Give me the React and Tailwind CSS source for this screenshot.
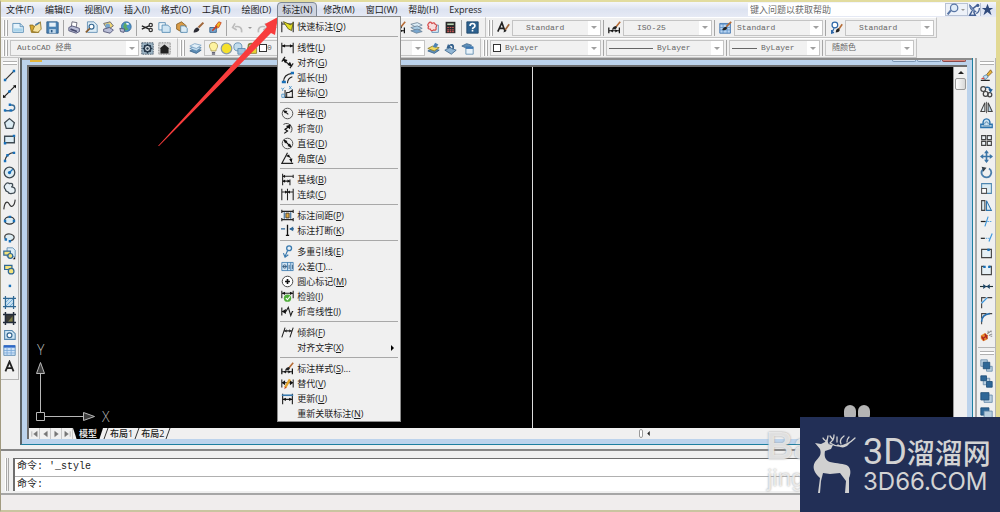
import React, { useState } from "react";

// 16x16 drawings used by the toolbars and the menu
const icons = {
  newFile: (
    <>
      <path d="M1 3h9l4 4v7H1z" fill="#e6f3fb" stroke="#4d86b0" />
      <path d="M2 9h11v4H2z" fill="#a9d3ea" />
      <path d="M10 3v4h4" fill="none" stroke="#4d86b0" />
    </>
  ),
  open: (
    <>
      <path d="M1 5h4l1 2h6v7H3z" fill="#d9a92c" stroke="#8a6d1d" />
      <path d="M4 13l3-7 7-5 1 9-4 4z" fill="#f7e3a1" stroke="#8a6d1d" />
      <path d="M8 5l5-3" stroke="#4d7ca8" strokeWidth="2" />
    </>
  ),
  save: (
    <>
      <path d="M1 1h13l1 1v13H1z" fill="#4a82b4" stroke="#2c5a86" />
      <path d="M4 2h8v5H4z" fill="#e7f0f8" />
      <path d="M4 10h8v5H4z" fill="#bcd4e8" />
      <path d="M6 11h2v3H6z" fill="#2c5a86" />
    </>
  ),
  print: (
    <>
      <path d="M5 1l6 1-1 6-6-1z" fill="#fff" stroke="#556" />
      <path d="M1 8l4-2 9 3v4l-4 2-9-3z" fill="#b9bdd6" stroke="#474a6e" />
      <path d="M3 10l8 3" stroke="#474a6e" strokeWidth="2" />
    </>
  ),
  preview: (
    <>
      <path d="M3 1h8l4 4v9H3z" fill="#dcecf6" stroke="#5686ad" />
      <circle cx="8" cy="7" r="3" fill="#fff" stroke="#376892" strokeWidth="1.5" />
      <path d="M6 9l-5 5" stroke="#8a5b2b" strokeWidth="2" />
    </>
  ),
  publish: (
    <>
      <path d="M2 3l8-2 4 5-7 5z" fill="#f0d774" stroke="#5a5a6c" />
      <circle cx="7" cy="6" r="3" fill="#79a6cd" />
      <path d="M2 10l7-2 5 3-4 4-8-2z" fill="#b9bdd6" stroke="#474a6e" />
    </>
  ),
  globe: (
    <>
      <circle cx="9" cy="7" r="6" fill="#4b95cf" stroke="#376892" />
      <path d="M7 2l4 2-2 3 3 3-4 2-3-5z" fill="#5aa866" />
      <path d="M1 9l6 1-1 4-4-1z" fill="#b9bdd6" stroke="#474a6e" />
      <path d="M9 3l3 1" stroke="#fff" strokeWidth="2" />
    </>
  ),
  cut: (
    <>
      <path d="M1 6l9 4M1 10l9-4" stroke="#222" strokeWidth="1.5" />
      <circle cx="12" cy="5" r="2" fill="none" stroke="#333" strokeWidth="1.5" />
      <circle cx="12" cy="11" r="2" fill="none" stroke="#333" strokeWidth="1.5" />
    </>
  ),
  copyClip: (
    <>
      <path d="M1 2h8v9H1z" fill="#eef6fb" stroke="#4d86b0" />
      <path d="M5 5h7l3 3v6H5z" fill="#cfe5f3" stroke="#4d86b0" />
    </>
  ),
  paste: (
    <>
      <path d="M2 4l6-3 6 5-5 8-7-4z" fill="#d99b45" stroke="#815a22" />
      <path d="M7 6h5l3 3v5H7z" fill="#dcecf6" stroke="#4d86b0" />
    </>
  ),
  brush: (
    <>
      <path d="M8 8l6-6" stroke="#a0673b" strokeWidth="2.5" />
      <path d="M2 14c0-4 3-6 5-6l2 2c0 2-3 4-7 4z" fill="#2b2b33" />
    </>
  ),
  blockEdit: (
    <>
      <path d="M8 6l4-5 3 1-3 6-3 1z" fill="#f3b91d" stroke="#c73e23" />
      <path d="M1 8h8v6H1z" fill="#78a6cf" stroke="#2c5a86" />
      <path d="M4 12l6-6" stroke="#c73e23" strokeWidth="2" />
    </>
  ),
  undo: <path d="M13 14c1-6-3-8-8-7m0-4L2 8l5 3" fill="none" stroke="#bcbcbc" strokeWidth="2" />,
  redo: <path d="M3 14C2 8 6 6 11 7m0-4l3 5-5 3" fill="none" stroke="#bcbcbc" strokeWidth="2" />,
  pan: <path d="M8 1v14M1 8h14M5 4l3-3 3 3M5 12l3 3 3-3" fill="none" stroke="#376892" />,
  zoom: (
    <>
      <circle cx="7" cy="6" r="4" fill="#dcecf6" stroke="#376892" strokeWidth="1.5" />
      <path d="M10 9l5 6" stroke="#223" strokeWidth="2" />
    </>
  ),
  sheets: (
    <>
      <path d="M1 4l8-2 6 3-7 3z" fill="#dcecf6" stroke="#6b8396" />
      <path d="M1 8l8-2 6 3-7 3z" fill="#a9cbe4" stroke="#6b8396" />
      <path d="M1 12l8-2 6 3-7 2z" fill="#78a6cf" stroke="#6b8396" />
    </>
  ),
  markup: (
    <>
      <path d="M6 5h8v9H6z" fill="#dcecf6" stroke="#5686ad" />
      <path
        d="M2 3q2-3 4 0q3-2 4 1q3 1 1 4q1 4-3 3q-3 2-4-1q-4 0-2-3q-2-2 0-4z"
        fill="#f7dede"
        stroke="#d64a4a"
        strokeWidth="1.5"
      />
    </>
  ),
  calc: (
    <>
      <path d="M2 1h12v14H2z" fill="#2a2a2a" />
      <path d="M4 3h8v2H4z" fill="#b8d3b0" />
      <path d="M4 8h8M4 11h8M4 13h8" stroke="#c55" strokeDasharray="2 1" strokeWidth="1.5" />
    </>
  ),
  help: (
    <>
      <path d="M1 1h14v14H1z" fill="#2d618f" stroke="#1c4468" />
      <path d="M5 6c0-4 6-4 6 0 0 2-3 2-3 4M8 11v2" fill="none" stroke="#fff" strokeWidth="2" />
    </>
  ),
  textStyle: (
    <>
      <path d="M1 13L6 2l4 11M3 9h6" fill="none" stroke="#222" strokeWidth="2" />
      <path d="M10 11l5-7" stroke="#a0673b" strokeWidth="2" />
      <path d="M8 14l1-4 3 2z" fill="#222" />
    </>
  ),
  dimStyle: (
    <>
      <path d="M1 8v7M14 8v7M1 12h13" stroke="#111" strokeWidth="1.5" />
      <path d="M3 12l3-2v4zM12 12l-3-2v4z" fill="#111" />
      <path d="M10 7l5-6" stroke="#b56b35" strokeWidth="2" />
      <path d="M5 10c1-3 3-4 5-4l1 2c-1 2-3 3-6 2z" fill="#222" />
    </>
  ),
  tableStyle: (
    <>
      <path d="M1 3h13v12H1z" fill="#b9d5f2" stroke="#2f68a8" />
      <path d="M1 4h13M1 8h13M1 11h13M5 3v12M10 3v12" stroke="#5f92ca" />
      <path d="M9 7l6-6" stroke="#b56b35" strokeWidth="2" />
      <path d="M4 11c1-3 3-4 5-4l1 2c-1 2-3 3-6 2z" fill="#222" />
    </>
  ),
  leaderStyle: (
    <>
      <circle cx="6" cy="5" r="3.5" fill="#fff" stroke="#2f68a8" strokeWidth="1.5" />
      <path d="M5 9l-3 6m0-4v4l3-1" fill="none" stroke="#2f68a8" strokeWidth="1.5" />
      <path d="M11 10l4-6" stroke="#b56b35" strokeWidth="2" />
      <path d="M7 14c0-3 2-5 4-5l1 2c0 2-2 3-5 3z" fill="#222" />
    </>
  ),
  gear: (
    <>
      <path d="M1 1h14v14H1z" fill="#9db4c4" stroke="#33475a" strokeDasharray="2 1" />
      <circle cx="8" cy="8" r="4" fill="#dfe8ee" stroke="#26384a" strokeWidth="2" />
      <circle cx="8" cy="8" r="1.5" fill="#26384a" />
      <path d="M8 2v2M8 12v2M2 8h2M12 8h2M4 4l1 1M11 11l1 1M12 4l-1 1M4 12l1-1" stroke="#26384a" strokeWidth="1.5" />
    </>
  ),
  home: (
    <>
      <path d="M1 1h14v14H1z" fill="#d8d8d8" stroke="#555" strokeDasharray="1 1" />
      <path d="M2 8l6-5 6 5h-1v6H3V8z" fill="#222" />
    </>
  ),
  layers: (
    <>
      <path d="M1 11l6-3 8 2-6 4z" fill="#5f8fb8" stroke="#3c668c" />
      <path d="M1 8l6-3 8 2-6 4z" fill="#c4dcee" stroke="#5686ad" />
      <path d="M1 5l6-3 8 2-6 4z" fill="#e2eff8" stroke="#7aa3c4" />
    </>
  ),
  bulb: (
    <>
      <path d="M5 11c0-3-2-3-2-6 0-6 10-6 10 0 0 3-2 3-2 6z" fill="#fdf3a0" stroke="#a8964a" />
      <path d="M6 13h4M6 15h4" stroke="#667" strokeWidth="1.5" />
    </>
  ),
  sun: <circle cx="8" cy="8" r="6.5" fill="#f5e12c" stroke="#8b9aa5" strokeWidth="1.5" />,
  viewport: (
    <>
      <circle cx="6" cy="6" r="5" fill="#c2dcec" stroke="#5686ad" />
      <path d="M6 8h9v7H6z" fill="#9fc0da" stroke="#5686ad" />
    </>
  ),
  lock: (
    <>
      <path d="M3 8V5c0-4 7-4 7 0v3" fill="none" stroke="#887f3a" strokeWidth="2" />
      <path d="M2 7h11v7H2z" fill="#e9d431" stroke="#887f3a" />
    </>
  ),
  layerCurrent: (
    <>
      <path d="M1 11l6-3 8 2-6 4z" fill="#5f8fb8" stroke="#3c668c" />
      <path d="M1 8l6-3 8 2-6 4z" fill="#f0d95c" stroke="#8a7a29" />
      <path d="M7 6l3-5 4 2-3 4z" fill="#4c82b4" />
    </>
  ),
  layerPrev: (
    <>
      <path d="M1 10l6-3 8 3-6 5z" fill="#90b5d4" stroke="#3c668c" />
      <path d="M12 9c2-7-3-8-6-5l-1-2-2 6 6-1-2-2c3-1 4 1 3 4z" fill="#33608c" />
    </>
  ),
  layerStates: (
    <>
      <path d="M1 5l6-3 6 2-5 4z" fill="#5f8fb8" stroke="#3c668c" />
      <path d="M6 6h9v9H6z" fill="#e8f2fa" stroke="#5686ad" />
      <path d="M6 7h9" stroke="#3c78b4" strokeWidth="3" />
    </>
  ),
  search: (
    <>
      <circle cx="10" cy="6" r="4.5" fill="#e1edf9" stroke="#5976a5" strokeWidth="1.5" />
      <path d="M6 9l-4 5" stroke="#5976a5" strokeWidth="2.5" />
    </>
  ),
  comm: (
    <>
      <path d="M2 2q0 8 8 9z" fill="#7d95bf" stroke="#425f93" />
      <path d="M6 7l5-4M5 10l-3 5h7l-2-4" fill="none" stroke="#425f93" strokeWidth="1.8" />
      <circle cx="12" cy="3" r="2" fill="#425f93" />
      <path d="M14 6q0 5-4 7" fill="none" stroke="#425f93" strokeWidth="1.5" />
    </>
  ),
  star: <path d="M8 1l2 5h5l-4 3 2 6-5-4-5 4 2-6-4-3h5z" fill="#2f4a7c" />,

  // draw toolbar
  line: (
    <>
      <path d="M3 13L13 3" stroke="#333" strokeWidth="1.5" />
      <path d="M1 12h3v3H1zM12 1h3v3h-3z" fill="#176fb8" />
    </>
  ),
  xline: (
    <>
      <path d="M1 15L15 1" stroke="#222" strokeWidth="1.5" />
      <path d="M0 12l4 3-4 1zM12 1l4 3V0z" fill="#111" />
      <circle cx="8" cy="8" r="1.8" fill="#176fb8" />
    </>
  ),
  pline: (
    <>
      <path d="M2 12h9c5-1 4-7 0-7H9" fill="none" stroke="#376892" strokeWidth="1.7" />
      <path d="M1 10h3v3H1zM8 10h3v3H8zM7 3h3v3H7z" fill="#176fb8" />
    </>
  ),
  polygon: <path d="M8 2l6 5-2 7H4L2 7z" fill="#dcecf3" stroke="#3e4a52" strokeWidth="1.6" />,
  rect: (
    <>
      <path d="M2 4h12v8H2z" fill="#dcecf3" stroke="#3e4a52" strokeWidth="1.6" />
      <path d="M1 11h3v3H1zM12 2h3v3h-3z" fill="#176fb8" />
    </>
  ),
  arc: (
    <>
      <path d="M2 14Q4 4 14 3" fill="none" stroke="#333" strokeWidth="1.5" />
      <path d="M1 12h3v3H1zM4 5h3v3H4zM12 2h3v3h-3z" fill="#176fb8" />
    </>
  ),
  circle: (
    <>
      <circle cx="8" cy="8" r="6.5" fill="#dcecf3" stroke="#3e4a52" strokeWidth="1.6" />
      <path d="M8 8l4-4" stroke="#176fb8" strokeWidth="1.5" />
      <circle cx="8" cy="8" r="2" fill="#176fb8" />
    </>
  ),
  cloud: (
    <path
      d="M3 3q2-3 5-1q4-1 4 2q-1 2-2 2q5 0 5 4q0 4-4 4q-4 1-5-2q-3 0-3-3q-3-3 0-6z"
      fill="#e6eff4"
      stroke="#3e4a52"
      strokeWidth="1.5"
    />
  ),
  spline: <path d="M1 14C2 3 6 4 8 8s6 3 7-6" fill="none" stroke="#333" strokeWidth="1.4" />,
  ellipse: (
    <>
      <ellipse cx="8" cy="8" rx="6" ry="4.5" fill="#dcecf3" stroke="#333" strokeWidth="1.6" />
      <path d="M1 7h3v3H1zM12 7h3v3h-3zM7 2h3v3H7z" fill="#176fb8" />
    </>
  ),
  ellipseArc: (
    <>
      <path d="M3 10C0 4 6 3 10 4c6 2 4 7-1 8" fill="#dcecf3" stroke="#444" strokeWidth="1.5" />
      <path d="M2 9h3v3H2zM7 11h3v3H7z" fill="#176fb8" />
    </>
  ),
  insertBlock: (
    <>
      <path d="M5 1h7l3 3v8H5z" fill="#dcecf6" stroke="#5686ad" />
      <path d="M1 5h8v5H1z" fill="#f3e27b" stroke="#2f6793" strokeWidth="1.5" />
      <circle cx="9" cy="11" r="3" fill="#f3e27b" stroke="#2f6793" strokeWidth="1.5" />
      <path d="M12 15h3v-3z" fill="#111" />
    </>
  ),
  makeBlock: (
    <>
      <path d="M2 3h9v5H2z" fill="#f3e27b" stroke="#2f6793" strokeWidth="1.5" />
      <circle cx="10" cy="10" r="3.5" fill="#f3e27b" stroke="#2f6793" strokeWidth="1.5" />
    </>
  ),
  point: <path d="M7 7h3v3H7z" fill="#176fb8" />,
  hatch: (
    <>
      <path d="M3 3h10v10H3z" fill="#c7dff0" />
      <path d="M3 8l5-5M3 13L13 3M8 13l5-5" stroke="#5da0d0" />
      <path d="M3 0v16M13 0v16M0 3h16M0 13h16" stroke="#2f6793" strokeWidth="1.5" />
    </>
  ),
  gradient: (
    <>
      <path d="M3 3h10v10H3z" fill="#3a3a38" />
      <path d="M6 12l6-7v7z" fill="#7d7c45" />
      <path d="M3 0v16M13 0v16M0 3h16M0 13h16" stroke="#222b3a" strokeWidth="1.8" />
    </>
  ),
  region: (
    <>
      <path d="M2 3h9l4 4v7H2z" fill="#cfe5f3" stroke="#5686ad" strokeWidth="1.3" />
      <circle cx="8" cy="9" r="3" fill="#fff" stroke="#376892" strokeWidth="1.5" />
    </>
  ),
  table: (
    <>
      <path d="M1 2h14v12H1z" fill="#cfe3f7" stroke="#5686ad" />
      <path d="M1 3h14" stroke="#2f68c8" strokeWidth="3" />
      <path d="M1 8h14M1 11h14M5 4v10M10 4v10" stroke="#7aa8d8" />
    </>
  ),
  mtext: <path d="M3 14L8 2l5 12M5 10h6" fill="none" stroke="#222" strokeWidth="2.2" />,

  // modify toolbar
  erase: (
    <>
      <path d="M8 7l5-6 2 3-5 5z" fill="#e8b23a" stroke="#7b5b23" />
      <path d="M4 9l4-2 2 3-4 3z" fill="#c9dff1" stroke="#4d86b0" />
      <path d="M1 12l3-2 2 3z" fill="#d5483f" />
      <path d="M1 14h11" stroke="#222" strokeWidth="1.5" />
    </>
  ),
  copy: (
    <>
      <circle cx="4" cy="5" r="3" fill="none" stroke="#444" strokeWidth="1.5" />
      <circle cx="7" cy="11" r="3" fill="none" stroke="#444" strokeWidth="1.5" />
      <circle cx="12" cy="12" r="2.5" fill="none" stroke="#444" strokeWidth="1.5" />
      <path d="M7 3c4-1 6 1 6 4m-2-2l2 3 2-3" fill="none" stroke="#245f95" strokeWidth="1.7" />
    </>
  ),
  mirror: (
    <>
      <path d="M6 2v11H1z" fill="#e6eff4" stroke="#444" strokeWidth="1.3" />
      <path d="M10 2v11h5z" fill="#b8d4e8" stroke="#444" strokeWidth="1.3" />
      <path d="M8 1v14" stroke="#444" strokeWidth="1" />
    </>
  ),
  offset: (
    <>
      <path d="M1 13h14v-4h-3c2-9-10-9-8 0H1z" fill="#cfe5f3" stroke="#2d74ad" strokeWidth="1.7" />
      <path d="M3 11h10M6 9c-1-4 5-4 4 0" fill="none" stroke="#3a6e98" />
    </>
  ),
  array: (
    <path d="M2 2h5v5H2zM9 2h5v5H9zM2 9h5v5H2zM9 9h5v5H9z" fill="#eef4f8" stroke="#444" strokeWidth="1.4" />
  ),
  move: (
    <>
      <path d="M8 2v12M2 8h12" stroke="#3b74a6" strokeWidth="2" />
      <path d="M8 0l3 4H5zM8 16l3-4H5zM0 8l4-3v6zM16 8l-4-3v6z" fill="#3b74a6" />
    </>
  ),
  rotate: (
    <>
      <path d="M4 4c-5 5 0 10 4 10 6 0 8-8 3-11" fill="none" stroke="#4a7eab" strokeWidth="2.2" />
      <path d="M2 1l6 1-4 5z" fill="#333f4a" />
    </>
  ),
  scale: (
    <>
      <path d="M2 2h12v12H2z" fill="#dcecf3" stroke="#4d86b0" strokeWidth="1.3" />
      <path d="M2 8h6v6H2z" fill="#fff" stroke="#555" strokeWidth="1.3" />
    </>
  ),
  stretch: (
    <>
      <path d="M2 2h4v12H2z" fill="#dcecf3" stroke="#444" strokeWidth="1.3" />
      <path d="M8 2l6 12H8z" fill="#dcecf3" stroke="#2d74ad" strokeWidth="1.3" />
    </>
  ),
  trim: (
    <>
      <path d="M1 8h6" stroke="#222" strokeWidth="1.5" />
      <path d="M9 8h6" stroke="#3c96dc" strokeDasharray="2 1" />
      <path d="M6 14l4-12" stroke="#3c96dc" strokeWidth="1.4" />
    </>
  ),
  extend: (
    <>
      <path d="M1 9h5" stroke="#222" strokeWidth="1.5" />
      <path d="M7 9h5" stroke="#3c96dc" strokeDasharray="2 1" />
      <path d="M11 13l4-10" stroke="#3c96dc" strokeWidth="1.4" />
    </>
  ),
  breakPoint: (
    <>
      <path d="M2 3h12v10H2z" fill="#e6f0f6" stroke="#444" strokeWidth="1.4" />
      <path d="M9 2h3v3H9z" fill="#176fb8" />
    </>
  ),
  breakLine: (
    <>
      <path d="M5 3H2v10h12V3h-3" fill="#e6f0f6" stroke="#444" strokeWidth="1.4" />
      <path d="M4 2h3v3H4zM10 2h3v3h-3z" fill="#176fb8" />
    </>
  ),
  join: (
    <>
      <path d="M0 8h16" stroke="#233" strokeWidth="1.4" />
      <path d="M4 5l4 3-4 3zM12 5L8 8l4 3z" fill="#1d4668" />
    </>
  ),
  chamfer: (
    <>
      <path d="M2 15V9M9 2h6M2 7V2h5" fill="none" stroke="#444" strokeWidth="1.4" />
      <path d="M2 9l7-7" stroke="#3c96dc" strokeWidth="1.6" />
    </>
  ),
  fillet: (
    <>
      <path d="M2 15V11M11 2h4M2 8V2h6" stroke="#444" fill="none" strokeWidth="1.3" />
      <path d="M2 12Q2 3 12 2" fill="none" stroke="#286fae" strokeWidth="2" />
    </>
  ),
  explode: (
    <>
      <path d="M1 8l5-3 4 3-1 5-5 2-3-3z" fill="#e88a2b" />
      <path d="M2 9l3 5M6 6l3 6M3 12l6-4" stroke="#a22" strokeWidth="1.6" />
      <path d="M9 6l5-4M11 8l4-2M10 2v3M14 3v1M13 9h2" stroke="#8b8b8b" strokeWidth="1.3" />
    </>
  ),
  front: (
    <>
      <path d="M1 1h8v8H1zM8 9h7v6H8z" fill="#b9cfe0" stroke="#6287a8" />
      <path d="M4 4h8v8H4z" fill="#2f6797" stroke="#1f4d77" />
    </>
  ),
  back: (
    <>
      <path d="M4 4h8v8H4z" fill="#b9cfe0" stroke="#6287a8" />
      <path d="M1 1h7v6H1zM8 8h7v7H8z" fill="#2f6797" stroke="#1f4d77" />
    </>
  ),
  above: (
    <>
      <path d="M5 5h10v9H5z" fill="#b9cfe0" stroke="#6287a8" />
      <path d="M1 2h10v9H1z" fill="#2f6797" stroke="#1f4d77" />
    </>
  ),
  under: (
    <>
      <path d="M1 1h10v9H1z" fill="#2f6797" stroke="#1f4d77" />
      <path d="M5 5h10v9H5z" fill="#b9cfe0" stroke="#6287a8" />
    </>
  ),

  // dimension menu
  quick: (
    <>
      <path d="M1 2v13M15 2v13M1 5h14" stroke="#222" strokeWidth="1.3" />
      <path d="M3 2l9 4 3-3-2 10-4-2-5-7z" fill="#e2dd22" stroke="#55520f" />
    </>
  ),
  linear: (
    <>
      <path d="M1 2v13M15 2v13M1 6h14" stroke="#222" strokeWidth="1.3" />
      <path d="M1 6l4-2v4zM15 6l-4-2v4z" fill="#111" />
    </>
  ),
  aligned: (
    <>
      <path d="M3 5l9 7M1 7l4-6M11 15l4-6" stroke="#222" strokeWidth="1.4" />
      <path d="M2 3l6 2-3 4zM14 13l-6-2 3-4z" fill="#111" />
    </>
  ),
  arcLen: (
    <>
      <path d="M3 14Q3 4 14 3" fill="none" stroke="#222" strokeWidth="1.4" />
      <path d="M8 15Q8 9 14 7" fill="none" stroke="#222" strokeWidth="1.3" />
      <path d="M1 12h5v3H1zM12 1h4v3h-4z" fill="#176fb8" />
    </>
  ),
  ordinate: (
    <>
      <path d="M5 5v9h10M7 14V8h3l4-3v9" fill="none" stroke="#222" strokeWidth="1.3" />
      <path d="M0 2l2 2 2-2M2 4v2M1 10h3v4H1zM10 0l3 4M13 0l-3 4" fill="none" stroke="#3c8cc8" />
    </>
  ),
  radius: (
    <>
      <circle cx="8" cy="8" r="6.5" fill="none" stroke="#444" strokeWidth="1.1" />
      <path d="M4 5l5 4" stroke="#111" strokeWidth="1.3" />
      <path d="M2 4l6 1-3 3z" fill="#111" />
    </>
  ),
  jogged: (
    <>
      <path d="M3 3C9-1 17 6 12 13" fill="none" stroke="#444" strokeWidth="1.2" />
      <path d="M4 14l4-3-3-2 6-4" fill="none" stroke="#111" strokeWidth="1.5" />
      <path d="M12 3l-1 6-5-4z" fill="#111" />
    </>
  ),
  diameter: (
    <>
      <circle cx="8" cy="8" r="6.5" fill="none" stroke="#444" strokeWidth="1.1" />
      <path d="M4 4l8 8" stroke="#111" strokeWidth="1.4" />
      <path d="M3 3l5 2-3 3zM13 13l-5-2 3-3z" fill="#111" />
    </>
  ),
  angular: (
    <>
      <path d="M8 1L1 14h14" fill="none" stroke="#222" strokeWidth="1.4" />
      <path d="M8 4q5 2 5 9" fill="none" stroke="#222" />
      <path d="M6 5l4-2 1 4zM13 13l-3-4 4-1z" fill="#111" />
    </>
  ),
  baseline: (
    <>
      <path d="M2 1v14M15 2v4M11 8v7M2 4h13M2 10h9" stroke="#222" strokeWidth="1.3" />
      <path d="M2 4l3-2v4zM2 10l3-2v4zM11 10l-3-2v4z" fill="#111" />
    </>
  ),
  continued: (
    <>
      <path d="M1 1v14M8 1v14M15 1v14M1 5h14" stroke="#222" strokeWidth="1.3" />
      <path d="M8 5L5 3v4zM8 5l3-2v4z" fill="#111" />
    </>
  ),
  spacing: (
    <>
      <path d="M1 1v4M15 1v4M1 11v4M15 11v4M1 3h14M1 13h14" stroke="#222" strokeWidth="1.4" />
      <path d="M6 5h4v6H6z" fill="#e0a73c" stroke="#333" />
      <path d="M4 4v8M12 4v8" stroke="#2f6797" strokeWidth="1.3" />
    </>
  ),
  dimBreak: (
    <>
      <path d="M0 6h5M11 6h5" stroke="#2f6797" strokeWidth="1.7" />
      <path d="M8 1v13M6 14h4" stroke="#111" strokeWidth="1.6" />
      <path d="M15 3v6l-5-3z" fill="#2f6797" />
    </>
  ),
  leader: (
    <>
      <circle cx="10" cy="4" r="3" fill="#e8f1f8" stroke="#3879ae" strokeWidth="1.6" />
      <path d="M8 7l-3 7m-2-4l2 5 4-3" fill="none" stroke="#3879ae" strokeWidth="1.4" />
    </>
  ),
  tolerance: (
    <>
      <path d="M1 3h14v10H1zM8 3v10M12 3v10" fill="#cfe3f3" stroke="#3879ae" />
      <circle cx="4.5" cy="8" r="2" fill="none" stroke="#274e70" />
      <path d="M10 6v5M14 6v5M2 8h5" stroke="#274e70" />
    </>
  ),
  centerMark: (
    <>
      <circle cx="8" cy="8" r="6.5" fill="#fff" stroke="#444" strokeWidth="1.2" />
      <path d="M8 5v6M5 8h6" stroke="#111" strokeWidth="2" />
    </>
  ),
  inspect: (
    <>
      <path d="M1 1v9M15 1v9M1 4h14" stroke="#222" strokeWidth="1.3" />
      <path d="M1 4l4-2v4zM15 4l-4-2v4z" fill="#111" />
      <circle cx="8" cy="10" r="4.5" fill="#4fae3a" />
      <path d="M6 10l2 2 3-4" fill="none" stroke="#fff" strokeWidth="1.4" />
    </>
  ),
  jogLinear: (
    <>
      <path d="M1 3v10M1 8h5l3-5 3 10 2-5h1" fill="none" stroke="#222" strokeWidth="1.4" />
      <path d="M1 8l5-3v6z" fill="#111" />
    </>
  ),
  oblique: (
    <>
      <path d="M1 14L5 2M11 14l4-12M4 6h9" stroke="#222" strokeWidth="1.3" />
      <path d="M4 6l3-2v4zM13 6l-3-2v4z" fill="#333" />
    </>
  ),
  override: (
    <>
      <path d="M1 3v10M15 3v10M1 7h14" stroke="#222" strokeWidth="1.3" />
      <path d="M1 7l4-3v6zM15 7l-4-3v6z" fill="#111" />
      <path d="M5 13l6-10" stroke="#e2a32d" strokeWidth="3" />
      <path d="M4 15l1-3 2 1z" fill="#c73e23" />
    </>
  ),
  update: (
    <>
      <path d="M2 2v13M14 2v13M2 9h12" stroke="#222" strokeWidth="1.4" />
      <path d="M1 4h14" stroke="#3879ae" strokeWidth="2" />
      <path d="M2 9l4-2v4zM14 9l-4-2v4z" fill="#111" />
    </>
  ),
};

const Icon = ({ name }) => (
  <svg viewBox="0 0 16 16" className="size-[13px] shrink-0" aria-hidden="true">
    {icons[name]}
  </svg>
);

const IconButton = ({ name }) => (
  <button
    aria-label={name}
    className="flex h-4 w-[17px] shrink-0 items-center justify-center"
  >
    <Icon name={name} />
  </button>
);

const Separator = () => (
  <div className="flex h-4 w-[5px] shrink-0 justify-center">
    <div className="w-px bg-[#a5a5a5]" />
  </div>
);

const Grip = () => (
  <div className="flex h-4 w-[9px] shrink-0 justify-center gap-px">
    <div className="w-0.5 border-r border-[#a8a8a8] bg-white" />
    <div className="w-0.5 border-r border-[#a8a8a8] bg-white" />
  </div>
);

const DownArrow = () => (
  <svg viewBox="0 0 6 3" className="h-[3px] w-1.5" aria-hidden="true">
    <path d="M0 0h6L3 3z" fill="#a0a0a0" />
  </svg>
);

const SmallDrop = () => (
  <button aria-label="more" className="flex h-4 w-2 items-center justify-center">
    <svg viewBox="0 0 4 2" className="h-0.5 w-1" aria-hidden="true">
      <path d="M0 0h4L2 2z" fill="#999" />
    </svg>
  </button>
);

const Combo = ({ label, value, width, pad, children }) => (
  <div className={`relative h-4 shrink-0 ${width}`}>
    <select
      aria-label={label}
      className={`block h-4 w-full appearance-none border border-[#c4c4c4] bg-[#f1f1f1] font-['Liberation_Mono','Noto_Sans_CJK_SC',monospace] text-[8px] leading-[12px] text-[#666] ${pad}`}
    >
      <option>{value}</option>
    </select>
    {children && (
      <div className="pointer-events-none absolute inset-y-0 left-[3px] flex items-center">
        {children}
      </div>
    )}
    <div className="pointer-events-none absolute inset-y-px right-px flex w-3 items-center justify-center bg-white">
      <DownArrow />
    </div>
  </div>
);

const Toolbar = ({ children }) => (
  <div className="flex shrink-0 items-center border-t border-r border-b border-[#c4c4c4] border-t-white">
    {children}
  </div>
);

const dimensionGroups = [
  [{ icon: "quick", text: "快速标注", hotkey: "Q" }],
  [
    { icon: "linear", text: "线性", hotkey: "L" },
    { icon: "aligned", text: "对齐", hotkey: "G" },
    { icon: "arcLen", text: "弧长", hotkey: "H" },
    { icon: "ordinate", text: "坐标", hotkey: "O" },
  ],
  [
    { icon: "radius", text: "半径", hotkey: "R" },
    { icon: "jogged", text: "折弯", hotkey: "J" },
    { icon: "diameter", text: "直径", hotkey: "D" },
    { icon: "angular", text: "角度", hotkey: "A" },
  ],
  [
    { icon: "baseline", text: "基线", hotkey: "B" },
    { icon: "continued", text: "连续", hotkey: "C" },
  ],
  [
    { icon: "spacing", text: "标注间距", hotkey: "P" },
    { icon: "dimBreak", text: "标注打断", hotkey: "K" },
  ],
  [
    { icon: "leader", text: "多重引线", hotkey: "E" },
    { icon: "tolerance", text: "公差", hotkey: "T", dots: true },
    { icon: "centerMark", text: "圆心标记", hotkey: "M" },
    { icon: "inspect", text: "检验", hotkey: "I" },
    { icon: "jogLinear", text: "折弯线性", hotkey: "J" },
  ],
  [
    { icon: "oblique", text: "倾斜", hotkey: "F" },
    { text: "对齐文字", hotkey: "X", submenu: true },
  ],
  [
    { icon: "dimStyle", text: "标注样式", hotkey: "S", dots: true },
    { icon: "override", text: "替代", hotkey: "V" },
    { icon: "update", text: "更新", hotkey: "U" },
    { text: "重新关联标注", hotkey: "N" },
  ],
];

const DimensionMenu = () => (
  <div
    role="menu"
    className="absolute top-[14px] left-0 z-20 w-[124px] border border-[#8c8c8c] bg-[#f0f0f0] pt-0.5"
  >
    {dimensionGroups.map((group, index) => (
      <React.Fragment key={index}>
        {index > 0 && <div className="mx-0.5 mt-0.5 mb-[3px] h-px bg-[#a8a8a8]" />}
        {group.map((item) => (
          <button
            key={item.text}
            role="menuitem"
            className="flex h-[15px] w-full items-center pl-[3px] text-left leading-[15px] hover:bg-[#d5e1f2]"
          >
            <span className="flex w-4">{item.icon && <Icon name={item.icon} />}</span>
            <span>
              {item.text}(<u>{item.hotkey}</u>){item.dots && "..."}
            </span>
            {item.submenu && (
              <svg viewBox="0 0 3 6" className="mr-1.5 ml-auto h-1.5 w-[3px]" aria-hidden="true">
                <path d="M0 0l3 3-3 3z" fill="#000" />
              </svg>
            )}
          </button>
        ))}
      </React.Fragment>
    ))}
  </div>
);

const menus = [
  "文件(F)",
  "编辑(E)",
  "视图(V)",
  "插入(I)",
  "格式(O)",
  "工具(T)",
  "绘图(D)",
  "标注(N)",
  "修改(M)",
  "窗口(W)",
  "帮助(H)",
  "Express",
];

const MenuBar = () => {
  const [openMenu, setOpenMenu] = useState("标注(N)");

  return (
    <nav className="flex h-[15px] items-center bg-linear-to-b from-[#f4f6fb] via-[#dde3f1] to-[#e6eaf5] pr-0.5 text-[9px] text-[#1c1c1c]">
      {menus.map((menu) => (
        <div key={menu} className="relative">
          <button
            onClick={() => setOpenMenu(openMenu === menu ? "" : menu)}
            className={`mr-px block h-[15px] rounded-t-sm border px-1 leading-[13px] ${
              openMenu === menu
                ? "border-[#7d8794] bg-[#cfd4df]"
                : "border-transparent"
            }`}
          >
            {menu}
          </button>
          {menu === "标注(N)" && openMenu === menu && <DimensionMenu />}
        </div>
      ))}
      <input
        aria-label="帮助"
        placeholder="键入问题以获取帮助"
        className="ml-auto h-[13px] w-[197px] bg-white px-0.5 text-[9px] placeholder:text-[#6a6a6a]"
      />
      <div className="flex h-[13px] items-center border border-[#b8c2d4] bg-[#eef2f9]">
        <button aria-label="搜索" className="w-[13px]">
          <Icon name="search" />
        </button>
        <SmallDrop />
      </div>
      <button
        aria-label="通讯中心"
        className="flex h-[13px] w-[13px] items-center border-r border-[#b8c2d4] bg-[#eef2f9]"
      >
        <Icon name="comm" />
      </button>
      <button aria-label="收藏夹" className="w-[13px]">
        <Icon name="star" />
      </button>
    </nav>
  );
};

const StandardRow = () => (
  <div className="flex h-[21px] items-stretch">
    <Toolbar>
      <Grip />
      <IconButton name="newFile" />
      <IconButton name="open" />
      <IconButton name="save" />
      <Separator />
      <IconButton name="print" />
      <IconButton name="preview" />
      <IconButton name="publish" />
      <IconButton name="globe" />
      <Separator />
      <IconButton name="cut" />
      <IconButton name="copyClip" />
      <IconButton name="paste" />
      <IconButton name="brush" />
      <IconButton name="blockEdit" />
      <Separator />
      <IconButton name="undo" />
      <SmallDrop />
      <IconButton name="redo" />
      <SmallDrop />
      <Separator />
      <IconButton name="pan" />
      <IconButton name="zoom" />
      <IconButton name="preview" />
      <IconButton name="zoom" />
      <Separator />
      <IconButton name="table" />
      <IconButton name="region" />
      <IconButton name="dimStyle" />
      <IconButton name="sheets" />
      <IconButton name="markup" />
      <IconButton name="calc" />
      <Separator />
      <IconButton name="help" />
      <div className="w-1" />
    </Toolbar>
    <Toolbar>
      <Grip />
      <IconButton name="textStyle" />
      <Combo label="文字样式" value="Standard" width="w-[89px]" pad="pl-[13px]" />
      <Separator />
      <IconButton name="dimStyle" />
      <Combo label="标注样式" value="ISO-25" width="w-[89px]" pad="pl-[13px]" />
      <Separator />
      <IconButton name="tableStyle" />
      <Combo label="表格样式" value="Standard" width="w-[89px]" pad="pl-0.5" />
      <Separator />
      <IconButton name="leaderStyle" />
      <Combo label="多重引线样式" value="Standard" width="w-[89px]" pad="pl-[13px]" />
      <div className="w-0.5" />
    </Toolbar>
  </div>
);

const PropertiesRow = () => (
  <div className="flex h-5 items-stretch">
    <Toolbar>
      <Grip />
      <Combo label="工作空间" value="AutoCAD 经典" width="w-[129px]" pad="pl-1.5" />
      <IconButton name="gear" />
      <IconButton name="home" />
      <div className="w-1" />
    </Toolbar>
    <Toolbar>
      <Grip />
      <IconButton name="layers" />
      <Combo label="图层" value="0" width="w-[221px]" pad="pl-[62px]">
        <Icon name="bulb" />
        <Icon name="sun" />
        <Icon name="viewport" />
        <Icon name="lock" />
        <span className="size-2 border border-[#333] bg-white" />
      </Combo>
      <IconButton name="layerCurrent" />
      <IconButton name="layerPrev" />
      <IconButton name="layerStates" />
      <div className="w-1" />
    </Toolbar>
    <Toolbar>
      <Grip />
      <Combo label="颜色" value="ByLayer" width="w-[111px]" pad="pl-[14px]">
        <span className="size-2 border border-[#333] bg-white" />
      </Combo>
      <Separator />
      <Combo label="线型" value="ByLayer" width="w-[118px]" pad="pl-[50px]">
        <span className="h-px w-11 bg-[#666]" />
      </Combo>
      <Separator />
      <Combo label="线宽" value="ByLayer" width="w-[91px]" pad="pl-[31px]">
        <span className="h-px w-[25px] bg-[#666]" />
      </Combo>
      <Separator />
      <Combo label="打印样式" value="随颜色" width="w-[89px]" pad="pl-1.5" />
      <div className="w-0.5" />
    </Toolbar>
  </div>
);

const drawTools = [
  "line", "xline", "pline", "polygon", "rect", "arc", "circle", "cloud",
  "spline", "ellipse", "ellipseArc", "insertBlock", "makeBlock", "point",
  "hatch", "gradient", "region", "table", "mtext",
];

const modifyTools = [
  "erase", "copy", "mirror", "offset", "array", "move", "rotate", "scale",
  "stretch", "trim", "extend", "breakPoint", "breakLine", "join", "chamfer",
  "fillet", "explode",
];

const orderTools = ["front", "back", "above", "under"];

const SideTools = ({ tools, height }) => (
  <div className="flex w-[18px] flex-col items-center border-r border-b border-[#b5b5b5] bg-[#f0f0f0] pb-1">
    <div className="mx-0.5 mt-[3px] mb-0.5 h-1 w-[14px] border-y border-[#b0b0b0] bg-white" />
    <div className={`flex flex-col items-center justify-between ${height}`}>
      {tools.map((tool) => (
        <IconButton key={tool} name={tool} />
      ))}
    </div>
  </div>
);

const UcsIcon = () => (
  <svg viewBox="0 0 90 88" className="ml-px h-[88px] w-[90px]" role="img" aria-label="UCS">
    <g fill="none" stroke="#b8b8b8">
      <path d="M6.5 72.5h8v8h-8zM10.5 72V34M15 76.5h38" />
      <path d="M6.5 33.5h8l-4-11zM53.5 72.5v8l11-4z" fill="#3c3c3c" />
    </g>
    <text x="7" y="15" fill="#b8b8b8" className="font-['Open_Sans',sans-serif] text-[14px] font-light">Y</text>
    <text x="72" y="82" fill="#b8b8b8" className="font-['Open_Sans',sans-serif] text-[14px] font-light">X</text>
  </svg>
);

const navArrows = ["M2 1v6M8 1L4 4l4 3z", "M7 1L3 4l4 3z", "M3 1l4 3-4 3z", "M8 1v6M2 1l4 3-4 3z"];

const TabSlash = () => (
  <svg viewBox="0 0 6 11" className="h-[11px] w-1.5" aria-hidden="true">
    <path d="M1 11L5 0" stroke="#333" />
  </svg>
);

const LayoutTabs = () => (
  <div className="flex h-[11px] items-stretch bg-[#f0f0f0] text-[9px] leading-[11px] text-[#222]">
    {navArrows.map((d) => (
      <button key={d} aria-label="翻页" className="w-[11px] border-r border-[#c8c8c8] px-px">
        <svg viewBox="0 0 10 8" className="h-2 w-[9px]" aria-hidden="true">
          <path d={d} fill="#777" stroke="#777" strokeWidth="0.5" />
        </svg>
      </button>
    ))}
    <button className="bg-black px-1.5 font-bold text-[#ddd] [clip-path:polygon(0_0,100%_0,88%_100%,12%_100%)]">
      模型
    </button>
    {["布局1", "布局2"].map((tab) => (
      <React.Fragment key={tab}>
        <TabSlash />
        <button className="px-px font-medium">{tab}</button>
      </React.Fragment>
    ))}
    <TabSlash />
    <div className="ml-auto flex w-[328px] items-center">
      <div className="h-[9px] w-1 rounded-xs border border-[#999] bg-white" />
      <svg viewBox="0 0 3 6" className="ml-1 h-[5px] w-[3px]" aria-hidden="true">
        <path d="M3 0v6L0 3z" fill="#222" />
      </svg>
    </div>
  </div>
);

const DrawingWindow = () => (
  <section className="flex min-w-0 flex-1 flex-col border-r border-b border-l-2 border-r-[#1d7fa0] border-b-[#1d7fa0] border-l-[#5d6468] bg-[#bcd3ec]">
    <div className="flex h-[7px] items-start border-t-2 border-[#8c8c8c] pr-[6px] pl-2">
      <div className="h-0.5 w-3 bg-[#e3b53c]" />
      <div className="ml-auto flex gap-px">
        <button aria-label="最小化" className="h-0.5 w-6 rounded-b-sm border border-t-0 border-[#7d97b4] bg-[#d5e3f2]" />
        <button aria-label="还原" className="h-0.5 w-6 rounded-b-sm border border-t-0 border-[#7d97b4] bg-[#d5e3f2]" />
        <button aria-label="关闭" className="h-0.5 w-6 rounded-b-sm border border-t-0 border-[#8a4a4a] bg-[#d98a80]" />
      </div>
    </div>
    <div className="mx-[5px] flex flex-1 flex-col border-t-2 border-l-2 border-[#6e6e6e]">
      <div className="flex flex-1 items-stretch">
        <div className="relative flex flex-1 items-end bg-black">
          <UcsIcon />
          <div className="absolute inset-y-0 left-[503px] w-px bg-[#dcdcdc]" />
        </div>
        <div className="w-[14px] border-l border-[#999] bg-[#f0f0f0]">
          <button aria-label="向上" className="flex h-[11px] w-full items-center justify-center">
            <svg viewBox="0 0 6 3" className="h-[3px] w-1.5" aria-hidden="true">
              <path d="M0 3h6L3 0z" fill="#222" />
            </svg>
          </button>
          <div className="mx-px h-3 rounded-xs border border-[#999] bg-linear-to-r from-white to-[#d8d8d8]" />
        </div>
      </div>
      <LayoutTabs />
    </div>
    <div className="h-[5px]" />
  </section>
);

const CommandWindow = () => (
  <section className="flex border-t-2 border-[#868686] bg-[#f0f0f0] pt-[7px] pb-0.5 font-['Liberation_Mono','Noto_Sans_CJK_SC',monospace] text-[10px] text-[#222]">
    <div className="mx-1 flex w-1 gap-px">
      <div className="w-0.5 border-r border-[#a8a8a8] bg-white" />
      <div className="w-0.5 border-r border-[#a8a8a8] bg-white" />
    </div>
    <div className="flex-1 border-t border-l-2 border-[#6e6e6e] bg-white">
      <p className="h-[17px] pl-0.5 leading-4 whitespace-pre">命令: '_style</p>
      <div className="flex h-[15px] items-center border-t border-[#b0b0b0] pl-0.5">
        <label htmlFor="command">命令:</label>
        <input id="command" className="h-[13px] flex-1 px-1 outline-none" />
      </div>
    </div>
  </section>
);

const RedArrow = () => (
  <svg
    viewBox="0 0 124 132"
    className="pointer-events-none absolute top-4 left-[156px] z-10 h-[132px] w-[124px]"
    aria-hidden="true"
  >
    <path d="M122 1L109 8l2 3L2 130l1 0L115 17l4 2z" fill="#f83c3c" />
  </svg>
);

const Watermark = () => (
  <div className="pointer-events-none absolute right-[182px] bottom-[20px] w-[52px] font-['Liberation_Sans',sans-serif] whitespace-nowrap text-white/70 [text-shadow:0_0_2px_#999]">
    <div className="text-[38px] leading-[36px] font-bold">Ba</div>
    <div className="pl-px text-[24px] leading-[28px]">jing</div>
  </div>
);

const BrandPlate = () => (
  <aside className="absolute right-0 bottom-0 z-30 flex h-[95px] w-[200px] items-center bg-[#222f56] pl-3 text-[#d3d3d3]">
    <svg viewBox="0 0 48 62" className="h-[62px] w-12 shrink-0" role="img" aria-label="3D66">
      <path
        d="M3 9l6 1 4-2 2-3 1 5 5 1-2 4-6 2c-1 5 0 9 5 11 7 2 14 1 18 4 3 3 3 8 1 12l0 15h-4l1-12-6-8-10 1-7-1-2 8-1 12H6l2-15C2 39 0 33 3 28c4-5 7-7 5-13z"
        fill="#d0d0d0"
      />
      <path
        d="M16 10c-1-4-4-3-5-6M15 7l1-5M18 9c3-3 4-4 4-8M21 6l-3-4M18 9c9 6 17 3 25-5M29 10c-1-2-1-5 3-8M35 8c0-2 1-4 2-5M25 8l0-5M26 11c4 3 8 2 11-2"
        fill="none"
        stroke="#d0d0d0"
        strokeWidth="1.3"
        strokeLinecap="round"
      />
    </svg>
    <div className="ml-[3px]">
      <div className="flex h-[34px] items-center font-['Roboto',sans-serif] text-[36px] leading-[34px]">
        3D
        <span className="font-['Noto_Sans_CJK_SC',sans-serif] text-[28px] font-medium">溜溜网</span>
      </div>
      <div className="font-['Inter',sans-serif] text-[24px] leading-[26px]">3D66.COM</div>
    </div>
  </aside>
);

const App = () => {
  return (
    <div className="relative overflow-hidden font-['Open_Sans','Noto_Sans_CJK_SC',sans-serif] text-[9px] text-black">
      <div className="flex min-h-screen flex-col border-t-2 border-r-4 border-b-2 border-l border-t-[#e2dc9f] border-r-[#e2d993] border-b-[#c9c4a0] border-l-[#a19a80] bg-[#f0f0f0]">
        <MenuBar />
        <StandardRow />
        <PropertiesRow />

        <main className="flex flex-1 items-stretch">
          <div className="mr-px">
            <SideTools tools={drawTools} height="h-[308px]" />
          </div>
          <DrawingWindow />
          <div className="ml-0.5 border-l-2 border-[#a8a8a8] pl-px">
            <SideTools tools={modifyTools} height="h-[276px]" />
            <SideTools tools={orderTools} height="h-16" />
          </div>
        </main>

        <div className="h-1" />
        <CommandWindow />
        <footer className="h-[17px] border-t-2 border-[#a6a6a6] bg-[#f0eded]" />
      </div>

      <RedArrow />
      <Watermark />
      <div className="absolute right-[130px] bottom-[91px] flex gap-0.5">
        <div className="h-4 w-3 rounded-full bg-[#b4b4b4]" />
        <div className="h-4 w-3 rounded-full bg-[#b4b4b4]" />
      </div>
      <BrandPlate />
    </div>
  );
};

export default App;
